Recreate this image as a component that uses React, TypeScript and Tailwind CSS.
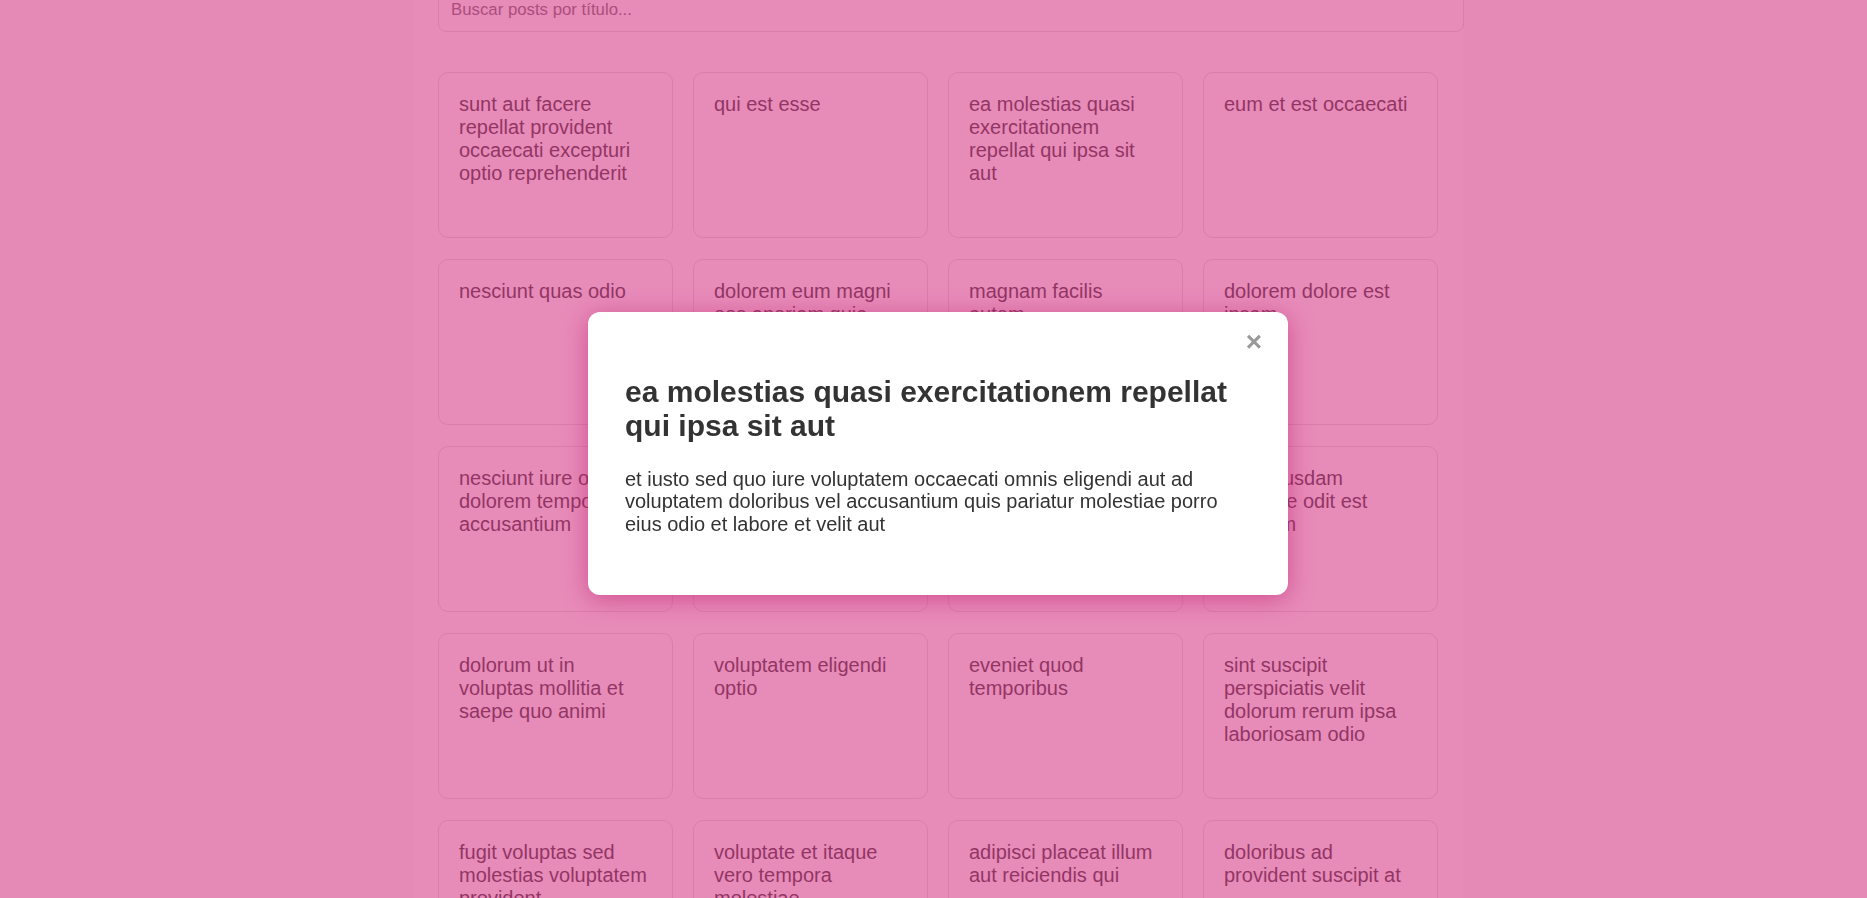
const posts = [
  'sunt aut facere repellat provident occaecati excepturi optio reprehenderit',
  'qui est esse',
  'ea molestias quasi exercitationem repellat qui ipsa sit aut',
  'eum et est occaecati',
  'nesciunt quas odio',
  'dolorem eum magni eos aperiam quia',
  'magnam facilis autem',
  'dolorem dolore est ipsam',
  'nesciunt iure omnis dolorem tempora et accusantium',
  'optio molestias id quia eum',
  'et ea vero quia laudantium autem',
  'in quibusdam tempore odit est dolorem',
  'dolorum ut in voluptas mollitia et saepe quo animi',
  'voluptatem eligendi optio',
  'eveniet quod temporibus',
  'sint suscipit perspiciatis velit dolorum rerum ipsa laboriosam odio',
  'fugit voluptas sed molestias voluptatem provident',
  'voluptate et itaque vero tempora molestiae',
  'adipisci placeat illum aut reiciendis qui',
  'doloribus ad provident suscipit at',
];

const selected = {
  title: 'ea molestias quasi exercitationem repellat qui ipsa sit aut',
  body: 'et iusto sed quo iure voluptatem occaecati omnis eligendi aut ad voluptatem doloribus vel accusantium quis pariatur molestiae porro eius odio et labore et velit aut',
};

const PostCard = ({ title }: { title: string }) => (
  <div className="h-[166px] rounded-[10px] border border-[#dddddd] bg-white p-5">
    <h3 className="text-[20px] leading-[23px] text-[#2a2a2a]">{title}</h3>
  </div>
);

const PostModal = () => (
  <div className="fixed inset-0 flex items-center justify-center bg-[rgba(215,62,138,0.6)] pl-[9px] pt-[9px]">
    <div className="relative w-[700px] rounded-xl bg-white pl-[37px] pr-[36px] pt-[63px] pb-[60px] shadow-[0_4px_24px_rgba(190,30,110,0.55)]">
      <button className="absolute top-[14px] right-[26px] text-[28px] leading-[31px] font-bold text-[#999999]">
        ×
      </button>
      <h2 className="mb-[25px] text-[30px] leading-[34px] font-bold text-[#333333]">{selected.title}</h2>
      <p className="text-[20px] leading-[22.5px] text-[#333333]">{selected.body}</p>
    </div>
  </div>
);

export default function App() {
  return (
    <div
      className="flex h-screen justify-center overflow-hidden bg-[#fafafa] pl-[9px]"
      style={{ fontFamily: '"Liberation Sans", Arial, sans-serif' }}
    >
      <div className="w-[1050px] bg-white px-[25px]">
        <input
          placeholder="Buscar posts por título..."
          className="-mt-[13px] mb-[40px] block w-[1026px] rounded-lg border border-[#dddddd] px-3 py-3 text-[16.8px] leading-[19px] placeholder:text-[#666666] focus:outline-none"
        />
        <div className="grid grid-cols-4 gap-x-5 gap-y-[21px]">
          {posts.map(title => (
            <PostCard key={title} title={title} />
          ))}
        </div>
      </div>
      <PostModal />
    </div>
  );
}
